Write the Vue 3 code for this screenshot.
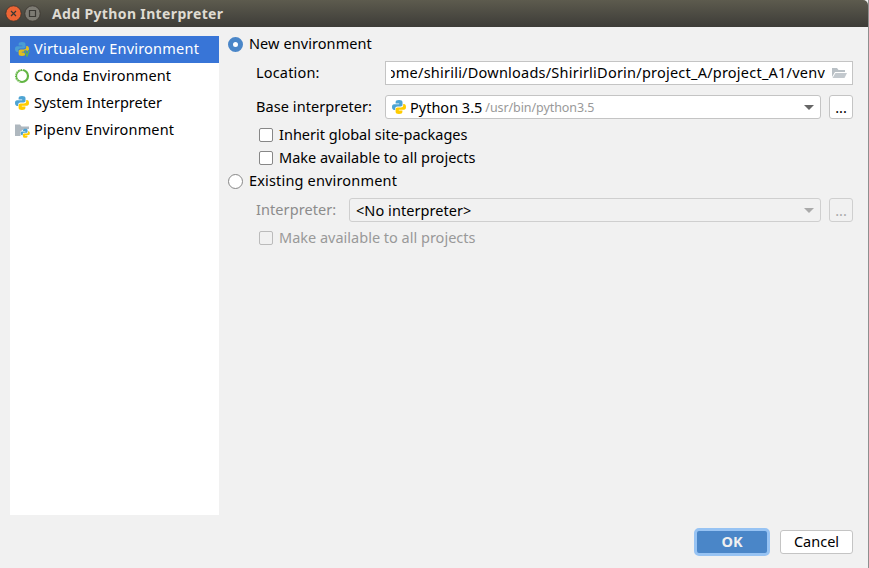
<script setup>
const environments = [
  { name: 'Virtualenv Environment', icon: 'virtualenv', active: true },
  { name: 'Conda Environment', icon: 'conda' },
  { name: 'System Interpreter', icon: 'python' },
  { name: 'Pipenv Environment', icon: 'pipenv' },
]
</script>

<template>
  <div class="window">
    <svg class="defs" width="0" height="0">
      <symbol id="python" viewBox="0 0 16 16">
        <path class="snake-blue" d="M8 1C5.600 1 4.600 1.800 4.600 3.200V4.600H8.200V5.200H3.100C1.700 5.200 1 6.200 1 8s.8 2.900 2.100 2.900H4.200V9.400C4.200 8.100 5.200 7.400 6.400 7.400H9.700C10.800 7.400 11.500 6.700 11.500 5.700V3.200C11.500 1.700 10.300 1 8 1Z" />
        <path class="snake-gold" d="M8 15c2.400 0 3.400-.8 3.400-2.200V11.400H7.800V10.800h5.100C14.300 10.800 15 9.800 15 8s-.8-2.900-2.100-2.900h-.7v1.500C12.200 7.900 11.200 8.500 9.900 8.500H6.600C5.500 8.500 4.600 9.300 4.600 10.300v2.500C4.600 14.300 5.700 15 8 15Z" />
      </symbol>
    </svg>
    <header class="titlebar">
      <svg class="ctl" viewBox="0 0 17 17"><circle class="close" cx="8.500" cy="8.500" r="7.700" /><path class="mark" d="M6 6l5 5M11 6l-5 5" /></svg>
      <svg class="ctl" viewBox="0 0 17 17"><circle class="max" cx="8.500" cy="8.500" r="7.700" /><path class="mark" d="M5.500 5.500h6v6h-6z" /></svg>
      <h1 class="title">Add Python Interpreter</h1>
    </header>
    <main class="body">
      <ul class="sidebar">
        <li v-for="e in environments" :key="e.name" class="item" :class="[e.icon, { active: e.active }]">
          <svg class="icon" viewBox="0 0 16 16">
            <use v-if="e.icon === 'python'" href="#python" />
            <g v-else-if="e.icon === 'virtualenv'"><use href="#python" class="dim" /><path class="vhalo" d="M11 9.500l2.200 5L15.400 9.500" /><path class="vmark" d="M10.800 9.500l2.200 5.500L15.200 9.500" /></g>
            <g v-else-if="e.icon === 'conda'"><circle class="ring" cx="8" cy="8" r="6" /><path class="ring-dots" d="M9 1.800A6.200 6.200 0 1 0 6 13.900" /></g>
            <g v-else><path class="folder" d="M1 2.500h5l1.500 2H15V7H10L6.500 9.500v4.500H1z" /><use href="#python" x="6" y="6" width="10.500" height="10.500" /></g>
          </svg>
          <span class="text">{{ e.name }}</span>
        </li>
      </ul>
      <section class="panel">
        <label class="radio-row new-env"><i class="radio on"></i><span class="text">New environment</span></label>
        <div class="field location">
          <span class="label text">Location:</span>
          <div class="input">
            <div class="clip text"><span class="path">/home/shirili/Downloads/ShirirliDorin/project_A/project_A1/venv</span></div>
            <svg class="open" viewBox="0 0 16 16"><path class="open-back" d="M1 3h5l1.500 2H14V7H4L1 12z" /><path class="open-front" d="M4.500 8H16l-2.500 5H1.500z" /></svg>
          </div>
        </div>
        <div class="field base">
          <span class="label text">Base interpreter:</span>
          <div class="combo"><svg class="icon" viewBox="0 0 16 16"><use href="#python" /></svg><span class="ver">Python 3.5</span><span class="hint">/usr/bin/python3.5</span><i class="arrow"></i></div>
          <button class="more">...</button>
        </div>
        <label class="check-row first"><i class="box"></i><span class="text">Inherit global site-packages</span></label>
        <label class="check-row second"><i class="box"></i><span class="text">Make available to all projects</span></label>
        <label class="radio-row existing-env"><i class="radio"></i><span class="text">Existing environment</span></label>
        <div class="field existing">
          <span class="label text off">Interpreter:</span>
          <div class="combo disabled"><span>&lt;No interpreter&gt;</span><i class="arrow"></i></div>
          <button class="more disabled">...</button>
        </div>
        <label class="check-row third off"><i class="box"></i><span class="text">Make available to all projects</span></label>
      </section>
    </main>
    <footer class="footer"><button class="ok">OK</button><button class="cancel">Cancel</button></footer>
  </div>
</template>

<style>
body { background: #f1f1f1; overflow: hidden; }
</style>
<style scoped>
* { box-sizing: border-box; }
.defs { position: absolute; }
.window { width: 869px; height: 568px; display: flex; flex-direction: column; background: #f1f1f1; border-right: 1px solid #8f8f8f; font: 14.5px/20px "Noto Sans", sans-serif; color: #000; }
.titlebar { height: 27px; display: flex; align-items: center; padding-left: 5px; gap: 2px; background: linear-gradient(#5d5b4e, #3d3c38); border-radius: 0 5px 0 0; flex: none; }
.ctl { width: 17px; height: 17px; }
.close { fill: #ec6535; stroke: #3a352e; stroke-width: .8; }
.max { fill: #7d7b73; stroke: #3a352e; stroke-width: .8; }
.mark { fill: none; stroke: #3a3833; stroke-width: 1.200; }
.title { margin: 0 0 0 9px; font-size: 14px; line-height: 20px; font-weight: 700; letter-spacing: .36px; color: #dfdbd2; white-space: pre; }
.text { padding-bottom: 2px; }
.body { display: flex; height: 488px; padding: 9px 15px 0 10px; flex: none; }
.sidebar { list-style: none; width: 209px; height: 479px; margin: 0; padding: 0; background: #fff; }
.item { height: 27px; display: flex; align-items: center; padding: 0 0 1px 4px; gap: 4px; white-space: pre; }
.item.active { background: #3875d7; color: #fff; }
.virtualenv { letter-spacing: .22px; }
.conda { letter-spacing: .11px; }
.python { letter-spacing: -.03px; }
.pipenv { letter-spacing: .17px; }
.icon { width: 16px; height: 16px; flex: none; }
.panel { flex: 1; padding-left: 9px; min-width: 0; white-space: pre; display: flex; flex-direction: column; }
.radio-row { height: 16px; display: flex; align-items: center; gap: 6px; }
.new-env { letter-spacing: .08px; }
.radio { width: 15px; height: 15px; border: 1px solid #878787; border-radius: 50%; background: #fff; }
.radio.on { border: 5px solid #4a86c8; }
.field { height: 24px; display: flex; align-items: center; padding-left: 28px; }
.label { width: 129px; letter-spacing: .08px; }
.off { color: #8c8c8c; }
.location { margin-top: 9px; }
.location .label { letter-spacing: .18px; }
.base { margin-top: 10px; }
.input { height: 24px; flex: 1; display: flex; align-items: center; background: #fff; border: 1px solid #c4c4c4; padding: 0 5px; }
.clip { width: 434px; overflow: hidden; display: flex; justify-content: flex-end; }
.path { letter-spacing: .23px; }
.open { width: 16px; height: 16px; margin-left: 6px; }
.combo { height: 24px; flex: 1; display: flex; align-items: center; border: 1px solid #c4c4c4; border-radius: 3px; background: #fff; padding: 0 6px 0 5px; }
.arrow { margin-left: auto; border: 5px solid transparent; border-top-color: #666; border-bottom: 0; }
.more { width: 24px; height: 24px; margin-left: 8px; padding: 0; border: 1px solid #c4c4c4; border-radius: 3px; background: #fff; font: inherit; }
.ver { margin-left: 3px; }
.hint { font-size: 12.500px; color: #999; margin-left: 3px; letter-spacing: -.08px; padding-top: 2px; }
.check-row { height: 14px; display: flex; align-items: center; gap: 6px; padding-left: 31px; }
.box { width: 14px; height: 14px; border: 1px solid #878787; border-radius: 2px; background: #fff; }
.first { margin-top: 9px; }
.second { margin-top: 9px; }
.existing-env { margin-top: 8px; letter-spacing: .17px; }
.existing { margin-top: 9px; }
.existing .label { width: 93px; }
.disabled { background: #f1f1f1; border-color: #cfcfcf; }
.combo.disabled { padding-left: 6px; letter-spacing: .06px; }
.disabled .arrow { border-top-color: #aaa; }
button.disabled { color: #aaa; }
.third { margin-top: 9px; }
.third.off { color: #999; }
.third .box { background: #f1f1f1; border-color: #bbb; }
.footer { display: flex; justify-content: flex-end; padding: 13px 15px 0 0; gap: 10px; align-items: center; }
.footer button { font: inherit; padding: 0 0 2px; }
.footer .ok { width: 76px; height: 28px; border: 3px solid #97c3f3; border-radius: 5px; background: #4a86c8; color: #f0f0f0; font-weight: 700; }
.footer .cancel { width: 73px; height: 24px; border: 1px solid #c4c4c4; border-radius: 3px; background: #fff; }
.snake-blue { fill: #4ea4d3; }
.snake-gold { fill: #fc0; }
.vhalo { fill: none; stroke: #3875d7; stroke-width: 3; }
.vmark { fill: none; stroke: #62b543; stroke-width: 1.300; }
.ring { fill: none; stroke: #62b543; stroke-width: 2.200; }
.ring-dots { fill: none; stroke: #fff; stroke-width: 1.200; stroke-dasharray: 1 1.500; }
.folder { fill: #afb8bf; }
.open-back { fill: #b9c0c5; }
.open-front { fill: #c3c9ce; }
.dim { opacity: .85; }
</style>
